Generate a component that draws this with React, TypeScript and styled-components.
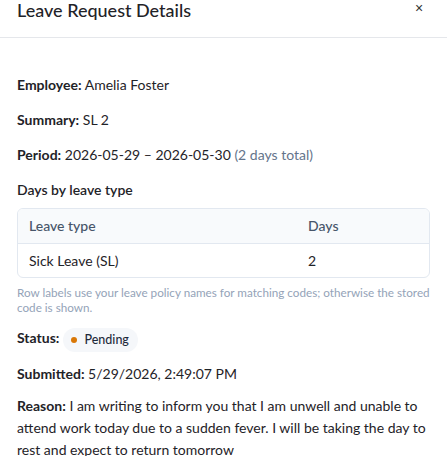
import React from "react";
import styled, { createGlobalStyle } from "styled-components";

const Global = createGlobalStyle`
  html, body { margin: 0; padding: 0; background: #fff; }
  body { font-family: Lato, "Noto Sans", sans-serif; color: #1f2328; }
  * { box-sizing: border-box; }
`;

const Modal = styled.div`
  width: 447px;
  height: 456px;
  overflow: hidden;
  background: #fff;
`;

const Header = styled.div`
  display: flex;
  align-items: flex-start;
  justify-content: space-between;
  padding: 0 17px;
  height: 38px;
  border-bottom: 1px solid #e5e7eb;
`;

const Title = styled.h2`
  margin: 0;
  font-size: 18px;
  font-weight: 500;
  line-height: 20px;
  color: #1f2328;
`;

const Close = styled.button`
  border: none;
  background: none;
  padding: 0;
  width: 22px;
  height: 16px;
  font-size: 14px;
  line-height: 16px;
  color: #333;
  cursor: pointer;
`;

const Body = styled.div`
  padding: 36px 17px 0;
`;

const Line = styled.p<{ $gap?: number }>`
  margin: 0 0 ${(p) => p.$gap ?? 13}px;
  font-size: 14px;
  line-height: 22px;
`;

const Label = styled.strong`
  font-weight: 700;
`;

const Muted = styled.span`
  color: #64748b;
`;

const SectionTitle = styled.h3`
  margin: 0 0 7px;
  font-size: 14px;
  font-weight: 600;
  line-height: 22px;
`;

const TableWrap = styled.div`
  border: 1px solid #e2e8f0;
  border-radius: 6px;
  overflow: hidden;
`;

const Table = styled.table`
  width: 100%;
  border-collapse: collapse;
  font-size: 14px;
`;

const Th = styled.th<{ $w?: number }>`
  text-align: left;
  font-weight: 500;
  color: #475569;
  background: #f8fafc;
  height: 34px;
  padding: 0 11px;
  border-bottom: 1px solid #e2e8f0;
  ${(p) => (p.$w ? `width: ${p.$w}px;` : "")}
`;

const Td = styled.td`
  height: 34px;
  padding: 0 11px;
`;

const Note = styled.p`
  margin: 7px 0 12px;
  font-size: 11.7px;
  line-height: 15px;
  color: #94a3b8;
`;

const StatusLine = styled.div`
  display: flex;
  align-items: flex-start;
  gap: 4px;
  font-size: 14px;
  line-height: 22px;
  margin-bottom: 12px;
`;

const Pill = styled.span`
  display: inline-flex;
  align-items: center;
  gap: 7px;
  height: 24px;
  padding: 0 9px 0 8px;
  border-radius: 12px;
  background: #f5f7fa;
  font-size: 12.5px;
  font-weight: 500;
  color: #1e293b;
  position: relative;
  top: 1px;
`;

const Dot = styled.span`
  width: 6px;
  height: 6px;
  border-radius: 50%;
  background: #d97706;
`;

export default function App() {
  return (
    <>
      <Global />
      <Modal>
        <Header>
          <Title>Leave Request Details</Title>
          <Close aria-label="Close">×</Close>
        </Header>
        <Body>
          <Line>
            <Label>Employee:</Label> Amelia Foster
          </Line>
          <Line>
            <Label>Summary:</Label> SL 2
          </Line>
          <Line>
            <Label>Period:</Label> 2026-05-29 – 2026-05-30 <Muted>(2 days total)</Muted>
          </Line>
          <SectionTitle>Days by leave type</SectionTitle>
          <TableWrap>
            <Table>
              <thead>
                <tr>
                  <Th>Leave type</Th>
                  <Th $w={132}>Days</Th>
                </tr>
              </thead>
              <tbody>
                <tr>
                  <Td>Sick Leave (SL)</Td>
                  <Td>2</Td>
                </tr>
              </tbody>
            </Table>
          </TableWrap>
          <Note>
            Row labels use your leave policy names for matching codes; otherwise the stored code is shown.
          </Note>
          <StatusLine>
            <Label>Status:</Label>
            <Pill>
              <Dot />
              Pending
            </Pill>
          </StatusLine>
          <Line $gap={10}>
            <Label>Submitted:</Label> 5/29/2026, 2:49:07 PM
          </Line>
          <Line>
            <Label>Reason:</Label> I am writing to inform you that I am unwell and unable to attend work today due
            to a sudden fever. I will be taking the day to rest and expect to return tomorrow
          </Line>
        </Body>
      </Modal>
    </>
  );
}
